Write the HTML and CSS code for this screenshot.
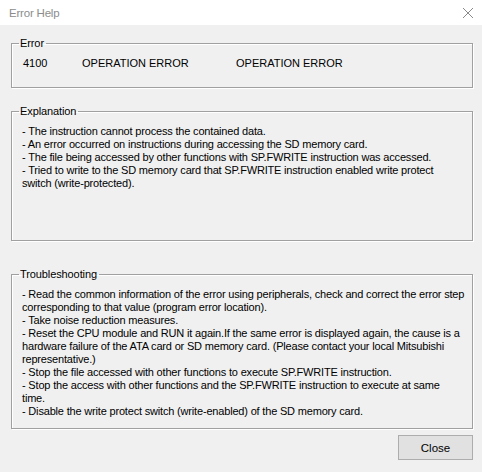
FILE: index.html
```html
<!DOCTYPE html>
<html>
<head>
<meta charset="utf-8">
<link rel="stylesheet" href="styles.css">
</head>
<body>
<div class="window">
  <div class="titlebar">
    <span class="title">Error Help</span>
    <svg class="close-x" width="12" height="12" viewBox="0 0 12 12"><path d="M1 1L11 11M11 1L1 11" stroke="#8a8a8a" stroke-width="1" fill="none"/></svg>
  </div>
  <div class="content">
    <fieldset class="group group-error">
      <legend>Error</legend>
      <div class="error-row">
        <span class="code">4100</span>
        <span class="name">OPERATION ERROR</span>
        <span class="name2">OPERATION ERROR</span>
      </div>
    </fieldset>
    <fieldset class="group group-expl">
      <legend>Explanation</legend>
      <div class="text">
        <div>- The instruction cannot process the contained data.</div>
        <div>- An error occurred on instructions during accessing the SD memory card.</div>
        <div>- The file being accessed by other functions with SP.FWRITE instruction was accessed.</div>
        <div>- Tried to write to the SD memory card that SP.FWRITE instruction enabled write protect<br>switch (write-protected).</div>
      </div>
    </fieldset>
    <fieldset class="group group-trouble">
      <legend>Troubleshooting</legend>
      <div class="text">
        <div>- Read the common information of the error using peripherals, check and correct the error step<br>corresponding to that value (program error location).</div>
        <div>- Take noise reduction measures.</div>
        <div>- Reset the CPU module and RUN it again.If the same error is displayed again, the cause is a<br>hardware failure of the ATA card or SD memory card. (Please contact your local Mitsubishi<br>representative.)</div>
        <div>- Stop the file accessed with other functions to execute SP.FWRITE instruction.</div>
        <div>- Stop the access with other functions and the SP.FWRITE instruction to execute at same<br>time.</div>
        <div>- Disable the write protect switch (write-enabled) of the SD memory card.</div>
      </div>
    </fieldset>
    <div class="buttons">
      <button class="btn">Close</button>
    </div>
  </div>
</div>
</body>
</html>
```
FILE: styles.css
```css
html, body {
  margin: 0;
  padding: 0;
}
body {
  width: 482px;
  height: 472px;
  background: #f0f0f0;
  font-family: "Liberation Sans", Arial, sans-serif;
  font-size: 11px;
  color: #000;
  overflow: hidden;
}
.window {
  display: flex;
  flex-direction: column;
  height: 472px;
}
.titlebar {
  height: 25px;
  background: #fff;
  display: flex;
  align-items: center;
  justify-content: space-between;
  padding: 0 8px 0 9px;
}
.title {
  color: #8c8c8c;
  font-size: 11.5px;
  letter-spacing: -0.2px;
}
.content {
  padding: 12px 9px 0 11px;
  display: flex;
  flex-direction: column;
}
.group {
  box-sizing: border-box;
  margin: 0;
  padding: 0;
  border: 1px solid #a0a0a0;
  box-shadow: 1px 1px 0 #fff, inset 1px 1px 0 #fff;
  min-width: 0;
}
.group legend {
  margin-left: 7px;
  padding: 0 2px 0 1px;
  line-height: 13px;
  letter-spacing: -0.1px;
}
.group-error {
  height: 51px;
}
.error-row {
  display: flex;
  padding: 6px 0 0 11px;
  line-height: 14px;
}
.code {
  width: 59px;
}
.name {
  width: 154px;
}
.group-expl {
  margin-top: 17px;
  height: 136px;
}
.group-trouble {
  margin-top: 27px;
  height: 161px;
}
.text {
  padding: 7px 0 0 10px;
  line-height: 13px;
  white-space: nowrap;
  letter-spacing: -0.18px;
}
.buttons {
  display: flex;
  justify-content: flex-end;
  padding-top: 6px;
}
.btn {
  width: 75px;
  height: 25px;
  margin: 0;
  padding: 0;
  background: #e1e1e1;
  border: 1px solid #adadad;
  font-family: "Liberation Sans", Arial, sans-serif;
  font-size: 11.5px;
  color: #000;
}
```
